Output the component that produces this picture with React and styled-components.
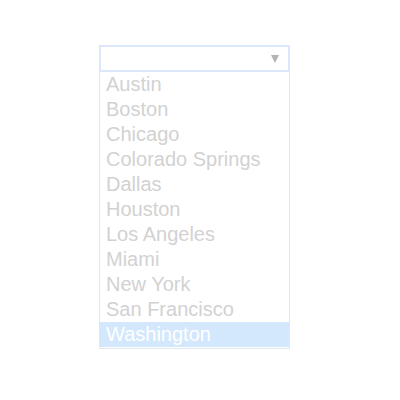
import React from 'react';
import styled, { createGlobalStyle } from 'styled-components';

const GlobalStyle = createGlobalStyle`
  html, body {
    margin: 0;
    padding: 0;
    background: #ffffff;
  }
  body {
    font-family: "Liberation Sans", Arial, sans-serif;
  }
`;

const Page = styled.div`
  width: 400px;
  height: 400px;
  padding: 45px 0 0 99px;
  box-sizing: border-box;
`;

const Dropdown = styled.div`
  width: 191px;
  display: flex;
  flex-direction: column;
`;

const SelectBox = styled.div`
  height: 27px;
  border: 2px solid #dbe7fa;
  box-sizing: border-box;
  display: flex;
  align-items: center;
  justify-content: flex-end;
  padding-right: 9px;
`;

const Arrow = styled.span`
  width: 0;
  height: 0;
  border-left: 4px solid transparent;
  border-right: 4px solid transparent;
  border-top: 8px solid #b4b4b4;
`;

const List = styled.ul`
  list-style: none;
  margin: 0;
  padding: 0 0 1px;
  border: 1px solid #dfe7f1;
  border-top: none;
`;

const Item = styled.li`
  height: 25px;
  line-height: 25px;
  padding-left: 6px;
  font-size: 20px;
  color: ${p => (p.$active ? '#ffffff' : '#d2d2d2')};
  background: ${p => (p.$active ? '#d3e7fd' : 'transparent')};
  white-space: nowrap;
`;

const cities = [
  'Austin',
  'Boston',
  'Chicago',
  'Colorado Springs',
  'Dallas',
  'Houston',
  'Los Angeles',
  'Miami',
  'New York',
  'San Francisco',
  'Washington'
];

const App = () => {
  return (
    <Page>
      <GlobalStyle />
      <Dropdown>
        <SelectBox>
          <Arrow />
        </SelectBox>
        <List>
          {cities.map(city => (
            <Item key={city} $active={city === 'Washington'}>
              {city}
            </Item>
          ))}
        </List>
      </Dropdown>
    </Page>
  );
};

export default App;
